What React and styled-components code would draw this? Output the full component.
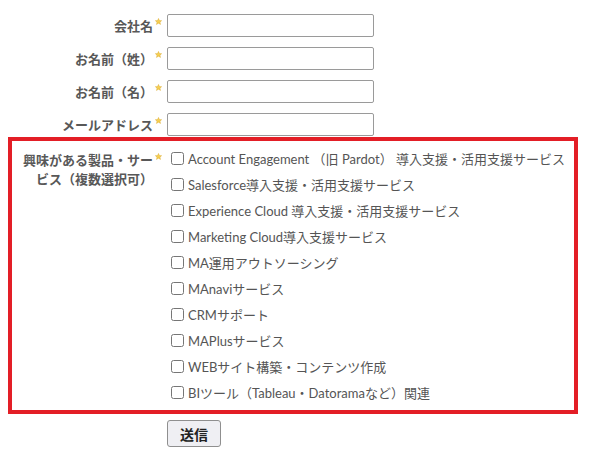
import React from "react";
import styled, { createGlobalStyle } from "styled-components";

const GlobalStyle = createGlobalStyle`
  body {
    margin: 8px;
    background: #ffffff;
    font-family: "Lato", "Noto Sans CJK JP", sans-serif;
    color: #555555;
  }
`;

const Form = styled.form`
  display: flex;
  flex-direction: column;
  padding-top: 6px;
`;

const Fields = styled.div`
  display: flex;
  flex-direction: column;
  gap: 10px;
`;

const Row = styled.div`
  display: grid;
  grid-template-columns: 145px 10px 207px;
  align-items: center;
  & > input {
    margin-left: 4px;
  }
`;

const Label = styled.label`
  font-size: 13px;
  font-weight: bold;
  line-height: 18px;
  color: #585858;
  text-align: right;
  font-family: "Noto Sans CJK JP", sans-serif;
`;

const StarCell = styled.span`
  align-self: start;
  display: flex;
  justify-content: center;
  padding-top: ${(p) => p.$top}px;
`;

const Star = ({ top = 4 }) => (
  <StarCell $top={top}>
    <svg width="7" height="7" viewBox="0 0 10 10">
      <path
        d="M5 0.6 L6.3 3.6 L9.5 3.8 L7.1 5.9 L7.9 9.2 L5 7.4 L2.1 9.2 L2.9 5.9 L0.5 3.8 L3.7 3.6 Z"
        fill="#f6cf52"
        stroke="#d8a72a"
        strokeWidth="0.6"
        strokeLinejoin="round"
      />
    </svg>
  </StarCell>
);

const TextInput = styled.input`
  box-sizing: border-box;
  width: 207px;
  height: 23px;
  border: 1px solid #9a9a9a;
  border-radius: 2px;
  padding: 0 4px;
  font-size: 13px;
  background: #fff;
`;

const Highlight = styled.div`
  box-sizing: border-box;
  width: 570px;
  margin-top: 1px;
  border: 4px solid #e31e26;
  padding: 4px 0 5px;
  display: grid;
  grid-template-columns: 141px 10px 1fr;
  align-items: start;
`;

const MultiLabel = styled(Label)`
  padding-top: 5px;
  line-height: 19px;
`;

const Options = styled.div`
  display: flex;
  flex-direction: column;
  margin-left: 4px;
`;

const Option = styled.label`
  display: flex;
  align-items: center;
  height: 26px;
  font-size: 13px;
  color: #555555;
  white-space: nowrap;
  font-family: "Lato", "Noto Sans CJK JP", sans-serif;
`;

const Check = styled.input`
  width: 13px;
  height: 13px;
  margin: 0 4px 0 4px;
  accent-color: #777;
`;

const Submit = styled.button`
  margin: 6px 0 0 159px;
  width: 54px;
  height: 27px;
  align-self: flex-start;
  border: 1px solid #8f8f8f;
  border-radius: 3px;
  background: #efeff3;
  font-family: "Noto Sans CJK JP", sans-serif;
  font-size: 14px;
  font-weight: bold;
  color: #222;
  padding: 0;
`;

const fields = ["会社名", "お名前（姓）", "お名前（名）", "メールアドレス"];

const options = [
  "Account Engagement （旧 Pardot） 導入支援・活用支援サービス",
  "Salesforce導入支援・活用支援サービス",
  "Experience Cloud 導入支援・活用支援サービス",
  "Marketing Cloud導入支援サービス",
  "MA運用アウトソーシング",
  "MAnaviサービス",
  "CRMサポート",
  "MAPlusサービス",
  "WEBサイト構築・コンテンツ作成",
  "BIツール（Tableau・Datoramaなど）関連",
];

export default function App() {
  return (
    <>
      <GlobalStyle />
      <Form onSubmit={(e) => e.preventDefault()}>
        <Fields>
          {fields.map((f) => (
            <Row key={f}>
              <Label>{f}</Label>
              <Star top={4} />
              <TextInput type="text" />
            </Row>
          ))}
        </Fields>
        <Highlight>
          <MultiLabel>興味がある製品・サービス（複数選択可）</MultiLabel>
          <Star top={8} />
          <Options>
            {options.map((o) => (
              <Option key={o}>
                <Check type="checkbox" />
                {o}
              </Option>
            ))}
          </Options>
        </Highlight>
        <Submit type="submit">送信</Submit>
      </Form>
    </>
  );
}
